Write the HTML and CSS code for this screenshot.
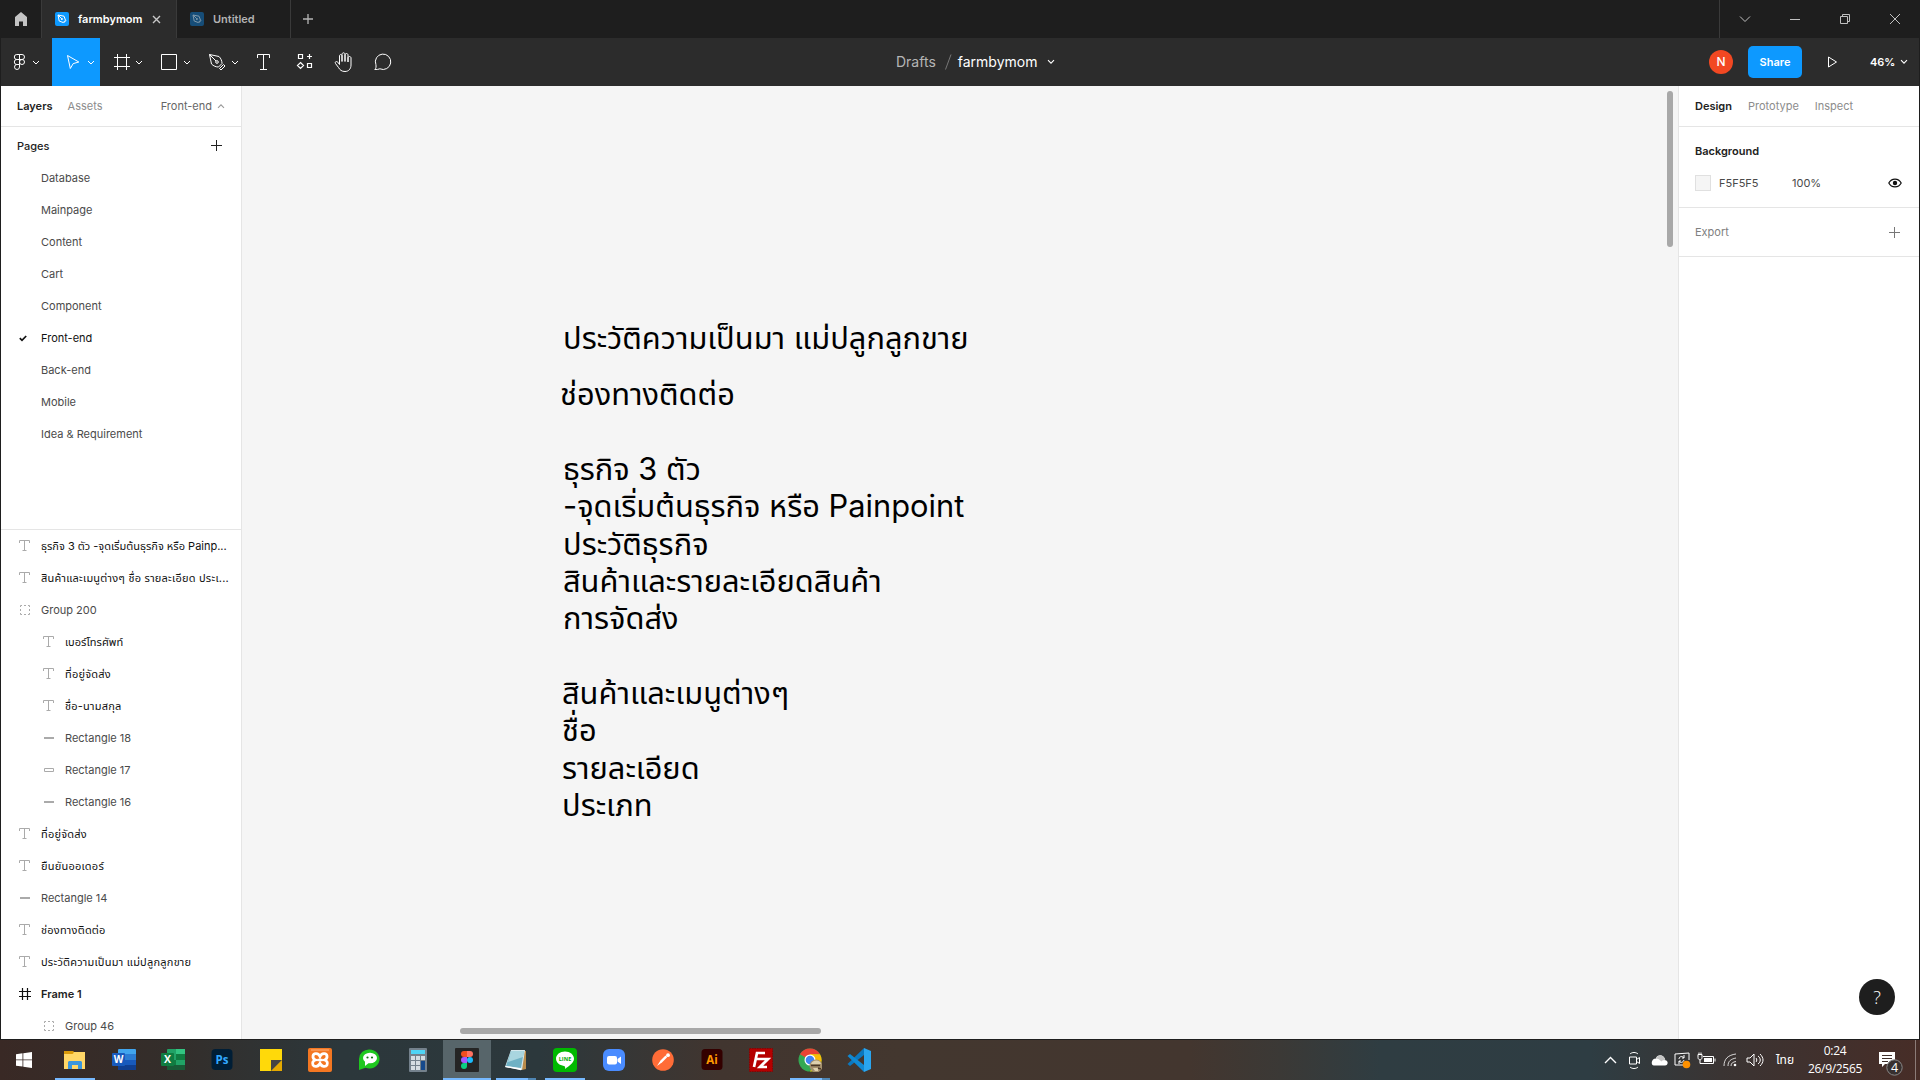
FILE: index.html
```html
<!DOCTYPE html>
<html lang="th">
<head>
<meta charset="utf-8">
<title>farmbymom</title>
<link rel="stylesheet" href="styles.css">
</head>
<body>
<svg class="defs" width="0" height="0">
  <symbol id="chev" viewBox="0 0 8 6"><path d="M1 1.2 4 4.2 7 1.2" fill="none" stroke="currentColor" stroke-width="1.1"/></symbol>
  <symbol id="text" viewBox="0 0 14 14"><path d="M1.5 4V1.5h10V4M6.5 1.5v10M4.5 11.5h4" fill="none" stroke="currentColor"/></symbol>
  <symbol id="group" viewBox="0 0 14 14"><path d="M2.5 4V2.5H4M6 2.5h2M10 2.500h1.500V4M11.500 6v2M11.500 10v1.500H10M8 11.500H6M4 11.500H2.500V10M2.500 8V6" fill="none" stroke="currentColor"/></symbol>
  <symbol id="line" viewBox="0 0 14 14"><path d="M2 7h10" stroke="currentColor" stroke-width="2"/></symbol>
  <symbol id="rect" viewBox="0 0 14 14"><path d="M2.500 5.500h9v3h-9z" fill="none" stroke="currentColor"/></symbol>
  <symbol id="frame" viewBox="0 0 14 14"><path d="M4.500 1v12M9.500 1v12M1 4.500h12M1 9.500h12" fill="none" stroke="currentColor" stroke-width="1.200"/></symbol>
  <symbol id="pen" viewBox="0 0 14 14"><rect width="14" height="14" rx="2" fill="var(--tile)"/><path d="M3 3l6 1.200 1.500 4-2.300 2.300-4-1.500zM3 3l3.500 3.500M8.500 11l2.500-2.500" fill="none" stroke="var(--nib)"/><circle cx="6.900" cy="6.900" r="1" fill="var(--nib)"/></symbol>
</svg>
<div class="app">
  <header class="tabs">
    <div class="tab home"><svg width="14" height="14" viewBox="0 0 14 14"><path d="M7 0 13 5v9H9V9.500H5V14H1V5z" fill="#c4c4c4"/></svg></div>
    <div class="tab current"><svg class="file" width="14" height="14"><use href="#pen"/></svg><span>farmbymom</span><svg class="close" width="9" height="9" viewBox="0 0 9 9"><path d="M1 1l7 7M8 1 1 8" stroke="#c8c8c8" stroke-width="1.400"/></svg></div>
    <div class="tab other"><svg class="file" width="14" height="14"><use href="#pen"/></svg><span>Untitled</span></div>
    <svg class="new" width="10" height="10" viewBox="0 0 10 10"><path d="M5 0v10M0 5h10" stroke="#b5b5b5" stroke-width="1.300"/></svg>
    <div class="window">
      <svg width="50" height="38" viewBox="0 0 50 38"><path d="M20 16.500l5 5 5-5"/></svg>
      <svg width="50" height="38" viewBox="0 0 50 38"><path d="M20 19.500h10"/></svg>
      <svg width="50" height="38" viewBox="0 0 50 38"><path d="M20.500 16.500h7v7h-7zM22.500 16.500v-2h7v7h-2"/></svg>
      <svg width="50" height="38" viewBox="0 0 50 38"><path d="M20 14l10 10M30 14 20 24"/></svg>
    </div>
  </header>

  <nav class="toolbar">
    <div class="tools">
      <svg width="51" height="48" viewBox="1 38 51 48"><path d="M19.500 54.500h-2.700a2.400 2.400 0 0 0 0 5h2.700zM19.500 54.500h2.500a2.400 2.400 0 0 1 0 5h-2.500zM19.500 59.500h-2.700a2.400 2.400 0 0 0 0 5h2.700zM19.500 64.500h-2.700a2.500 2.500 0 1 0 2.700 2.500z"/><circle cx="22" cy="62" r="2.500"/><path d="M33 61l3 3 3-3"/></svg>
      <svg class="active" width="48" height="48" viewBox="52 38 48 48"><path d="M67.500 55.500l11.300 6.500-5.600 1.600-2.900 4.900z"/><path d="M88 61l3 3 3-3"/></svg>
      <svg width="48" height="48" viewBox="100 38 48 48"><path d="M117.500 54v16M126.500 54v16M114 57.500h16M114 66.500h16"/><path d="M136 61l3 3 3-3"/></svg>
      <svg width="48" height="48" viewBox="148 38 48 48"><path d="M161.500 54.500h15v15h-15z"/><path d="M184 61l3 3 3-3"/></svg>
      <svg width="48" height="48" viewBox="196 38 48 48"><path d="M209.500 54.500l9.500 2c2 2 3 4.500 3 7l-3.500 3.500c-2.500 0-5-1-7-3zM209.500 54.500l6.500 6.500M219.500 68.500l4-4 1.500 1.500-4 4z"/><circle cx="217" cy="62" r="1.300" fill="#fff"/><path d="M232 61l3 3 3-3"/></svg>
      <svg width="40" height="48" viewBox="244 38 40 48"><path d="M257.500 58v-3.500h12V58M263.500 54.500v15M260 69.500h7"/></svg>
      <svg width="40" height="48" viewBox="284 38 40 48"><path d="M298.500 54.500h4v4h-4zM307.500 63.500h4v4h-4zM309.500 54v5M307 56.500h5M300.500 62.500l3 3-3 3-3-3z" stroke-width="1.200"/></svg>
      <svg width="40" height="48" viewBox="324 38 40 48"><path d="M339.500 64.500V56c0-2 2.500-2 2.500 0v5.500V54.500c0-2.300 3-2.300 3 0v7V55c0-2 3-2 3 0v7-4c0-2 3-2 3 0v7c0 4-2.500 6.500-6 6.500-3.500 0-5-1.500-6.500-4l-3-4c-1-1.700 1-2.700 2.300-1.300z"/></svg>
      <svg width="40" height="48" viewBox="364 38 40 48"><path d="M374.800 69.500c1.400-1.300 1.400-3 1.100-4.900a7.700 7.700 0 1 1 4 4.200c-1.500.7-3 .7-5.100.7z"/></svg>
    </div>
    <div class="title"><span class="drafts">Drafts</span><svg width="8" height="16" viewBox="0 0 8 16"><path d="M7 .5 1.500 15.500" stroke="#777"/></svg><span class="name">farmbymom</span><svg class="arrow" width="8" height="6"><use href="#chev"/></svg></div>
    <div class="actions">
      <span class="avatar">N</span><span class="share">Share</span>
      <svg class="play" width="11" height="12" viewBox="0 0 11 12"><path d="M1.500 1v10L9.500 6z" fill="none" stroke="#fff"/></svg>
      <span class="zoom">46%</span><svg width="8" height="6"><use href="#chev"/></svg>
    </div>
  </nav>

  <main class="work">
    <aside class="left">
      <div class="head"><b>Layers</b><span class="dim">Assets</span><span class="page">Front-end</span><svg class="up" width="8" height="6"><use href="#chev"/></svg></div>
      <section class="pages">
        <div class="pagehead"><span>Pages</span><svg width="11" height="11" viewBox="0 0 11 11"><path d="M5.500 0v11M0 5.500h11" stroke="#222"/></svg></div>
        <div class="row">Database</div><div class="row">Mainpage</div><div class="row">Content</div><div class="row">Cart</div><div class="row">Component</div>
        <div class="row sel"><svg width="8" height="7" viewBox="0 0 8 7"><path d="M.8 3.200 3 5.400 7.200 1" fill="none" stroke="#111" stroke-width="1.700"/></svg>Front-end</div>
        <div class="row">Back-end</div><div class="row">Mobile</div><div class="row">Idea &amp; Requirement</div>
      </section>
      <section class="layers">
        <div class="layer th mixed"><svg><use href="#text"/></svg><span>ธุรกิจ 3 ตัว -จุดเริ่มต้นธุรกิจ หรือ Painp...</span></div>
        <div class="layer th"><svg><use href="#text"/></svg><span>สินค้าและเมนูต่างๆ ชื่อ รายละเอียด ประเ...</span></div>
        <div class="layer"><svg><use href="#group"/></svg><span>Group 200</span></div>
        <div class="layer th in mixed"><svg><use href="#text"/></svg><span>เบอร์โทรศัพท์</span></div>
        <div class="layer th in"><svg><use href="#text"/></svg><span>ที่อยู่จัดส่ง</span></div>
        <div class="layer th in"><svg><use href="#text"/></svg><span>ชื่อ-นามสกุล</span></div>
        <div class="layer in"><svg><use href="#line"/></svg><span>Rectangle 18</span></div>
        <div class="layer in"><svg><use href="#rect"/></svg><span>Rectangle 17</span></div>
        <div class="layer in"><svg><use href="#line"/></svg><span>Rectangle 16</span></div>
        <div class="layer th"><svg><use href="#text"/></svg><span>ที่อยู่จัดส่ง</span></div>
        <div class="layer th"><svg><use href="#text"/></svg><span>ยืนยันออเดอร์</span></div>
        <div class="layer"><svg><use href="#line"/></svg><span>Rectangle 14</span></div>
        <div class="layer th"><svg><use href="#text"/></svg><span>ช่องทางติดต่อ</span></div>
        <div class="layer th"><svg><use href="#text"/></svg><span>ประวัติความเป็นมา แม่ปลูกลูกขาย</span></div>
        <div class="layer strong"><svg><use href="#frame"/></svg><span>Frame 1</span></div>
        <div class="layer in"><svg><use href="#group"/></svg><span>Group 46</span></div>
      </section>
    </aside>

    <section class="canvas">
      <div class="note history"><p>ประวัติความเป็นมา แม่ปลูกลูกขาย</p></div>
      <div class="note contact"><p>ช่องทางติดต่อ</p></div>
      <div class="note business"><p>ธุรกิจ 3 ตัว</p><p>-จุดเริ่มต้นธุรกิจ หรือ Painpoint</p><p>ประวัติธุรกิจ</p><p>สินค้าและรายละเอียดสินค้า</p><p>การจัดส่ง</p></div>
      <div class="note products"><p>สินค้าและเมนูต่างๆ</p><p>ชื่อ</p><p>รายละเอียด</p><p>ประเภท</p></div>
      <i class="vbar"></i><i class="hbar"></i>
    </section>

    <aside class="right">
      <div class="head"><b>Design</b><span class="dim">Prototype</span><span class="dim">Inspect</span></div>
      <section class="bg">
        <b>Background</b>
        <div class="fill"><i></i><span class="hex">F5F5F5</span><span>100%</span><svg width="14" height="10" viewBox="0 0 14 10"><path d="M.8 5C3.500-.2 10.500-.2 13.200 5 10.500 10.200 3.500 10.200.8 5z" fill="none" stroke="#111" stroke-width="1.200"/><circle cx="7" cy="5" r="2.200" fill="#111"/></svg></div>
      </section>
      <section class="export"><span>Export</span><svg width="11" height="11" viewBox="0 0 11 11"><path d="M5.500 0v11M0 5.500h11" stroke="#777"/></svg></section>
      <div class="help">?</div>
    </aside>
  </main>
</div>

<footer class="taskbar">
  <div class="start"><svg width="16" height="16" viewBox="0 0 16 16" fill="#fff"><path d="M0 2.200 6.500 1.300v6.200H0zM7.300 1.200 16 0v7.500H7.300zM0 8.300h6.500v6.200L0 13.700zM7.300 8.300H16V16l-8.700-1.200z"/></svg></div>
  <div class="apps">
    <div class="open"><svg viewBox="0 0 24 24"><path d="M1 3h9l2 2h10v16H1z" fill="#e6a817"/><path d="M1 6h9l1-2h11v17H1z" fill="#ffd767"/><path d="M1 3h9v2L9 6H1z" fill="#d99a0b"/><path d="M5 21v-7l1-1h12l1 1v7h-4v-4H9v4z" fill="#3a96dd"/></svg></div>
    <div><svg viewBox="0 0 24 24"><rect x="6" y="1" width="18" height="21" rx="1" fill="#41a5ee"/><path d="M6 6h18v6H6z" fill="#2b7cd3"/><path d="M6 12h18v5H6z" fill="#185abd"/><path d="M6 17h18v5H6z" fill="#103f91"/><rect y="5" width="13" height="13" rx="1" fill="#185abd"/><text x="6.500" y="15.300" font-size="10">W</text></svg></div>
    <div><svg viewBox="0 0 24 24"><rect x="6" y="1" width="18" height="21" rx="1" fill="#21a366"/><path d="M15 1h9v5h-9z" fill="#33c481"/><path d="M15 6h9v6h-9zM6 12h9v5H6z" fill="#107c41"/><path d="M6 17h18v5H6z" fill="#185c37"/><rect y="5" width="13" height="13" rx="1" fill="#107c41"/><text x="6.500" y="15.300" font-size="10.500">X</text></svg></div>
    <div><svg viewBox="0 0 24 24"><rect x="1.500" y="1" width="21" height="21" rx="4" fill="#001e36"/><text class="ps" x="12" y="15.500" font-size="11.500">Ps</text></svg></div>
    <div><svg viewBox="0 0 24 24"><path d="M1 1h22v12L13 23H1z" fill="#ffd90a"/><path d="M23 12v11H12z" fill="#e5a900"/><path d="M12 12h11L12 23z" fill="#444"/></svg></div>
    <div><svg viewBox="0 0 24 24"><rect width="24" height="24" rx="2" fill="#f47722"/><path d="M3 2h18" stroke="#ffb27d"/><path d="M12 8.500C10.500 5 5.500 4.500 5 8c-.2 2 1 3.500 2.500 4C5 12.500 4 15 5 17c1.500 2.500 5.500 1.500 7-1.500 1.500 3 5.500 4 7 1.500 1-2 0-4.500-2.500-5 1.500-.5 2.700-2 2.500-4-.5-3.500-5.500-3-7 .5z" fill="none" stroke="#fff" stroke-width="2.800"/><path d="M9.500 12h5" stroke="#fff" stroke-width="2.500"/></svg></div>
    <div><svg viewBox="0 0 24 24"><path d="M12.500 1.500a10 9.500 0 1 1-4 18.200L2 22V11a10 9.500 0 0 1 10.500-9.500z" fill="#1fc71f"/><ellipse cx="13" cy="10" rx="7" ry="5.300" fill="#fff"/><path d="M8 13v5l5-4z" fill="#fff"/><circle cx="10.500" cy="9.500" r="1.100" fill="#167516"/><circle cx="15" cy="9.500" r="1.100" fill="#167516"/></svg></div>
    <div><svg viewBox="0 0 24 24"><rect x="3" y="0" width="18" height="24" rx="1" fill="#74818c"/><path d="M5 2h14v4H5z" fill="#4fd4f5"/><path d="M5 8h4v4H5zM10 8h4v4h-4zM15 8h4v4h-4zM5 13h4v4H5zM10 13h4v4h-4zM5 18h4v4H5zM10 18h4v4h-4z" fill="#d6dde2"/><path d="M15 13h4v9h-4z" fill="#164a8c"/></svg></div>
    <div class="open focused"><svg viewBox="0 0 24 24"><rect width="24" height="24" rx="1" fill="#252525"/><path d="M12 3H9a3 3 0 0 0 0 6h3z" fill="#f24e1e"/><path d="M12 3h3a3 3 0 0 1 0 6h-3z" fill="#ff7262"/><path d="M12 9H9a3 3 0 0 0 0 6h3z" fill="#a259ff"/><circle cx="15" cy="12" r="3" fill="#1abcfe"/><path d="M12 15H9a3 3 0 1 0 3 3z" fill="#0acf83"/></svg></div>
    <div class="open stack"><svg viewBox="0 0 24 24"><path d="M18 3h4v18l-4 1z" fill="#b88b4b"/><path d="M7 2h14l-3 20-17-3z" fill="#d6e8ed"/><path d="M7 3h13l-3 17L2 18z" fill="#6fb1c4"/><path d="M7 3h13l-1 6L4 14z" fill="#a9d5df"/><path d="M2 18l15 2.500v1.700L1 19z" fill="#fff"/></svg></div>
    <div class="open"><svg viewBox="0 0 24 24"><rect width="24" height="24" rx="4" fill="#00b900"/><path d="M12 3.500c5 0 9 3.200 9 7.300 0 4-5 7.200-9 10.200.6-2-.2-2.900-1-3-4.500-.6-8-3.500-8-7.200 0-4.100 4-7.300 9-7.300z" fill="#fff"/><text class="ln" x="12" y="13" font-size="5.500">LINE</text></svg></div>
    <div><svg viewBox="0 0 24 24"><rect x="1" y="1" width="22" height="22" rx="6" fill="#4a8cff"/><rect x="5" y="8" width="10" height="8.500" rx="2" fill="#fff"/><path d="M15.500 11 19 8.500v7.500l-3.500-2.500z" fill="#fff"/></svg></div>
    <div><svg viewBox="0 0 24 24"><circle cx="12" cy="12" r="10.800" fill="#ff6c37"/><path d="M6 18l3.500-5.500 5-5 1.700 1.700-5 5z" fill="#fff"/><circle cx="17" cy="7.200" r="1.900" fill="#fff"/></svg></div>
    <div><svg viewBox="0 0 24 24"><rect x="1.500" y="1" width="21" height="21" rx="3.500" fill="#330000"/><text class="ai" x="12" y="15.500" font-size="11.500">Ai</text></svg></div>
    <div><svg viewBox="0 0 24 24"><rect x=".5" y=".5" width="23" height="23" fill="#b50000" stroke="#8c0000" stroke-dasharray="1.500 1"/><path d="M5 19 8 5h8M7 11h6M12 11h7l-8 8h7" fill="none" stroke="#fff" stroke-width="2.700"/></svg></div>
    <div class="open stack"><svg viewBox="0 0 24 24"><circle cx="12" cy="12" r="11.500" fill="#34a853"/><path d="M12 12 2 6.200A11.500 11.500 0 0 1 22 6.200H12z" fill="#ea4335"/><path d="M22 6.200A11.500 11.500 0 0 1 12 23.500L17 14l-5-8z" fill="#fbbc05"/><circle cx="12" cy="12" r="5.500" fill="#fff"/><circle cx="12" cy="12" r="4.300" fill="#4285f4"/><circle cx="18" cy="18" r="6.500" fill="#a4906e"/><path d="M13 16c1-4 9-5 10 0zM15 20h5v3h-3z" fill="#ded0ae"/><path d="M13 17.500h9M20 20l3 1" stroke="#4b3928" stroke-width="1.500"/></svg></div>
    <div><svg viewBox="0 0 24 24"><path d="M17 0 24 3v18l-7 3z" fill="#2aa5ee"/><path d="M17 0v7L3 18 .5 16z" fill="#0b78bf"/><path d="M17 24v-7L3 6 .5 8z" fill="#1089d3"/></svg></div>
  </div>
  <div class="tray">
    <svg width="24" height="40"><path d="M6 23l5.500-5.500L17 23" stroke-width="1.400"/></svg>
    <svg width="24" height="40"><path d="M6.500 17h7v7h-7zM13.500 19.500l3-2v6l-3-2M7 14c2-2 6-2 8 0M7 27c2 2 6 2 8 0"/></svg>
    <svg width="24" height="40"><path class="solid" d="M7 25.500h11c3.500 0 3.500-5 .3-5.200-1-6.500-8.500-6-9.300-1.800-5 0-5.500 7-2 7z"/><path class="shade" d="M9 18.500c1-4.200 8.500-4.500 9.300 1.800-2-.3-3 .2-4 1.200-1.500-1.800-3.500-3-5.300-3z"/></svg>
    <svg width="24" height="40"><path d="M17 25H4V14l14-1v7"/><path d="M8 19c0-3 4-3 5-1M13 15v3h-2M13 20c-1 3-4 3-5 1M8 24v-3h2"/><circle cx="15.500" cy="24.500" r="3.800" fill="#ff9100"/></svg>
    <svg width="24" height="40"><path d="M8 16.500h10.500v7H8M20 18.500v3M3 14.500h4v3c0 3-4 3-4 0zM4 14.500v-2M6 14.500v-2M5 19.500v4h3"/><path class="solid" d="M9 18h8v4H9z"/></svg>
    <svg width="24" height="40"><path d="M5 26c0-7 4-11 12-12M9 26c0-5 3-7 8-8M12 26c0-3 2-4 5-4.500" opacity=".8"/><circle cx="16" cy="25" r="1.300" fill="#fff"/></svg>
    <svg width="24" height="40"><path d="M4 18h3l4-4v12l-4-4H4zM13 18c1 1 1 3 0 4M15 16c3 2 3 6 0 8M17 14c4 4 4 8 0 12"/></svg>
    <span class="lang">ไทย</span>
    <span class="clock">0:24<br>26/9/2565</span>
    <svg class="news" width="30" height="40"><path class="solid" d="M3 12h16v12H9l-3 3v-3H3z"/><path class="ink" d="M6 15.500h10M6 18.500h10M6 21.500h6"/><circle cx="18.500" cy="27.500" r="7.700" fill="#37302f" stroke="#888"/><text x="18.500" y="32" font-size="12.500">4</text></svg>
    <i class="peek"></i>
  </div>
</footer>
</body>
</html>
```
FILE: styles.css
```css
* { box-sizing: border-box; }
body { margin: 0; width: 1920px; height: 1080px; overflow: hidden; display: flex; flex-direction: column; background: #1e1e1e; font: 11px/16px Inter, "Noto Sans Thai", "Noto Sans", sans-serif; color: #4a4a4a; }
b { font-weight: 600; }
svg { display: block; flex: none; }
.defs { position: absolute; }
.app { height: 1040px; padding: 0 1px 1px; display: flex; flex-direction: column; }

.tabs { height: 38px; flex: none; display: flex; align-items: center; background: #1e1e1e; }
.tab { height: 38px; display: flex; align-items: center; border-right: 1px solid #3a3a3a; font-weight: 600; color: #fff; }
.home { width: 41px; justify-content: center; }
.current { width: 135px; background: #2c2c2c; padding-left: 13px; --tile: #0d99ff; --nib: #fff; }
.other { width: 114px; padding-left: 13px; color: #b3b3b3; --tile: #164d78; --nib: #7f98aa; }
.file { margin-right: 9px; }
.close { margin-left: 10px; }
.new { margin-left: 12px; }
.window { display: flex; margin: 0 -1px 0 auto; height: 38px; border-left: 1px solid #3a3a3a; }
.window path { fill: none; stroke: #c0c0c0; }

.toolbar { height: 48px; flex: none; display: grid; grid-template-columns: 895px 1fr 210px; align-items: center; background: #2c2c2c; color: #fff; }
.tools { display: flex; }
.tools path, .tools circle { fill: none; stroke: #fff; }
.tools .active { background: #0d99ff; }
.title { display: flex; align-items: center; font-size: 14px; }
.drafts { color: #b5b5b5; margin-right: 8px; }
.name { margin: 0 10px 0 6px; }
.actions { display: flex; align-items: center; font-weight: 500; }
.avatar { width: 24px; height: 24px; margin-right: 15px; border-radius: 50%; background: #f24822; text-align: center; line-height: 24px; font-size: 12px; }
.share { width: 54px; height: 32px; border-radius: 5px; background: #0d99ff; text-align: center; line-height: 32px; font-weight: 600; }
.play { margin: 0 32px 0 25px; }
.zoom { margin-right: 5px; font-weight: 600; }

.work { flex: 1; min-height: 0; display: grid; grid-template-columns: 241px 1fr 241px; background: #fff; }
.left { border-right: 1px solid #e5e5e5; overflow: hidden; }
.right { border-left: 1px solid #e5e5e5; position: relative; }
.head { height: 41px; display: flex; align-items: center; gap: 16px; padding: 0 16px; border-bottom: 1px solid #e5e5e5; }
.left .head { gap: 15px; }
.head b, .bg b { color: #222; }
.dim { color: #8c8c8c; }
.page { margin-left: auto; color: #666; }
.up { transform: rotate(180deg); margin-left: -10px; color: #999; }
.pages { height: 403px; border-bottom: 1px solid #e5e5e5; }
.pagehead { height: 35px; padding: 2px 19px 0 16px; display: flex; align-items: center; justify-content: space-between; font-weight: 500; color: #222; }
.row { height: 32px; line-height: 32px; padding-left: 40px; }
.row.sel { display: flex; align-items: center; gap: 14px; padding-left: 18px; color: #111; }
.layer { height: 32px; display: flex; align-items: center; gap: 9px; padding-left: 17px; white-space: nowrap; }
.layer svg { width: 14px; height: 14px; color: #aaa; }
.layer.in { padding-left: 41px; }
.th { color: #111; letter-spacing: .22px; }
.th.mixed { letter-spacing: 0; }
.strong { font-weight: 600; color: #222; }
.layer.strong svg { color: #111; }

.canvas { position: relative; background: #f5f5f5; }
.note { position: absolute; font-size: 30.820px; line-height: 37.250px; color: #000; white-space: nowrap; }
.note p { margin: 0; height: 37.250px; }
.history { left: 321px; top: 233px; }
.contact { left: 318px; top: 289px; }
.business { left: 321px; top: 364px; }
.products { left: 320px; top: 588px; }
.vbar { position: absolute; right: 5px; top: 5px; width: 6px; height: 156px; border-radius: 3px; background: #a8a8a8; }
.hbar { position: absolute; left: 218px; bottom: 5px; width: 361px; height: 6px; border-radius: 3px; background: #a8a8a8; }

.bg { height: 81px; padding: 16px 16px 0; border-bottom: 1px solid #e5e5e5; }
.fill { display: flex; align-items: center; margin-top: 16px; }
.fill i { width: 16px; height: 16px; margin-right: 8px; background: #f5f5f5; border: 1px solid #e0e0e0; }
.hex { width: 73px; }
.fill svg { margin-left: auto; margin-right: 1px; }
.export { height: 49px; padding: 0 19px 0 16px; display: flex; align-items: center; justify-content: space-between; border-bottom: 1px solid #e5e5e5; color: #808080; }
.help { position: absolute; right: 24px; bottom: 24px; width: 36px; height: 36px; border-radius: 50%; background: #1e1e1e; color: #fff; text-align: center; font: 300 18px/36px "Open Sans", sans-serif; }

.taskbar { height: 40px; display: flex; background: linear-gradient(90deg, #392925 0, #332e2b 180px, #2c373b 340px, #2c383c 540px, #41352f 720px, #43372f 900px, #43362f 1190px, #3b3936 1280px, #2f3d42 1380px, #2e3d43 1590px, #3a3433 1720px, #472d27 1920px); color: #fff; }
.start { width: 48px; display: flex; align-items: center; justify-content: center; margin-right: 3px; }
.apps { display: flex; gap: 1px; }
.apps div { width: 48px; height: 40px; padding: 8px 12px; position: relative; }
.apps svg { width: 24px; height: 24px; }
.taskbar text { font-family: "Open Sans", "Noto Sans", sans-serif; font-weight: 700; fill: #fff; text-anchor: middle; }
.taskbar .ps { fill: #31a8ff; }
.taskbar .ai { fill: #ff9a00; }
.taskbar .ln { fill: #00a900; }
.open::after { content: ""; position: absolute; left: 4px; right: 4px; bottom: 0; height: 2px; background: #76b9ff; }
.open.focused { background: #57656a; }
.open.focused::after { left: 0; right: 0; }
.open.stack::after { background: linear-gradient(90deg, #76b9ff 32px, #4f86b4 32px); }
.tray { margin-left: auto; display: flex; align-items: center; }
.tray path { fill: none; stroke: #fff; }
.tray .solid { fill: #fff; stroke: none; }
.tray .shade { fill: #c4c4c4; stroke: none; }
.tray .ink { stroke: #40302b; }
.lang { width: 36px; text-align: center; font-size: 12px; }
.clock { width: 64px; text-align: center; font: 12px/18px "Open Sans", "Noto Sans", sans-serif; letter-spacing: -.3px; }
.news { margin-left: 9px; }
.taskbar .news text { font-weight: 400; }
.peek { width: 5px; height: 40px; margin-left: 9px; border-left: 1px solid #8b7b77; }
```
